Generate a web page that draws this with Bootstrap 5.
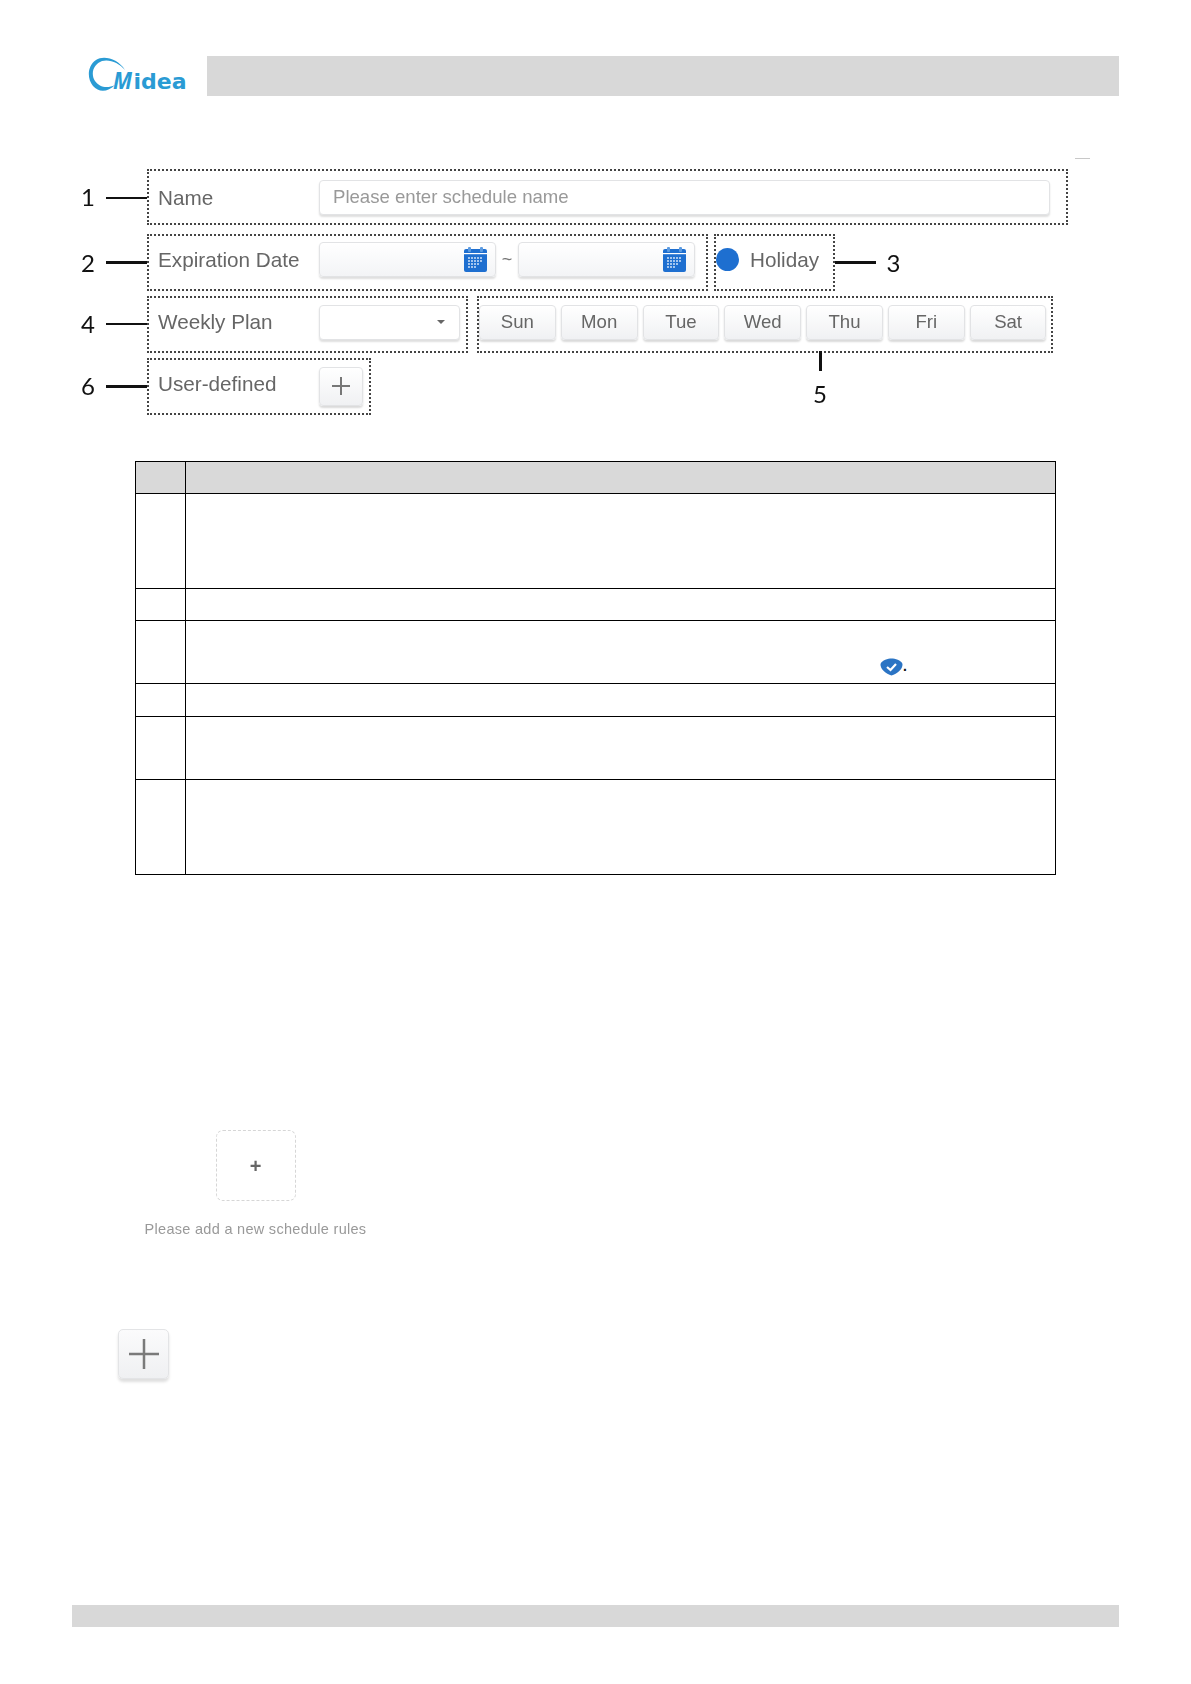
<!DOCTYPE html>
<html lang="en">
<head>
<meta charset="utf-8">
<title>Schedule rules</title>
<link href="https://cdn.jsdelivr.net/npm/bootstrap@5.3.0/dist/css/bootstrap.min.css" rel="stylesheet">
<style>
body{background:#fff;font-family:"Liberation Sans",Arial,sans-serif;color:#666}
.sheet{width:1191px;height:1684px;padding-top:56px;position:relative}
.top-strip{padding-left:88px;padding-right:72px}
.logo-slot{width:119px;height:44px;margin-top:-2px}
.grey-band{background:#d8d8d8;height:40px}
.logo-word{font-family:"DejaVu Sans",sans-serif;font-weight:700;font-size:22px;fill:#2a9bd4}
.logo-em{font-family:"Open Sans",sans-serif;font-weight:700;font-style:italic;font-size:24px;fill:#2a9bd4}
.tiny-dash{width:15px;height:1px;background:#c8c8c8;margin:60px 0 10px 1075px}
.form-zone{padding-left:81px;filter:blur(.35px)}
.form-row-a{margin-bottom:9.5px}
.form-row-b{margin-bottom:4.5px}
.form-row-c{margin-bottom:5.2px}
.num{font-family:Lato,"Liberation Sans",sans-serif;font-size:24px;line-height:1;color:#111;width:25px}
.lead-line{width:41px;background:#111;height:2px}
.lead-thick{height:3px}
.lead-low{margin-top:3px}
.tick-box{border:2px dotted #444;height:57px;padding-left:9px;flex:none}
.lift{padding-bottom:6px}
.lift-s{padding-bottom:4px}
.w-name{width:920.5px;height:55.5px;padding-top:1px}
.w-date{width:561px}
.w-holiday{width:120.500px;margin-left:6px;padding-left:0}
.w-weekly{width:321px}
.w-days{width:575.5px;margin-left:9px;padding-left:0;padding-right:4px;position:relative;gap:5px}
.w-user{width:223.5px}
.lab{width:161px;font-size:20.7px;color:#666;flex:none}
.lab-up{margin-top:-5px}
.fake-input{height:35px;background:#fff;border:1px solid #e2e3e5;border-radius:4px;box-shadow:0 2px 2px rgba(0,0,0,.13);font-size:18.6px;color:#999}
.f-name{width:731px;padding-left:13px}
.f-date{width:177px;background:linear-gradient(#fff,#f3f4f6);padding-right:8px}
.f-sel{width:141px;padding-right:14px}
.caret-mark{width:0;height:0;border-left:4px solid transparent;border-right:4px solid transparent;border-top:4px solid #666}
.tilde{width:22px;font-size:18px;text-align:center;color:#777}
.dot-blue{width:23px;height:23px;border-radius:50%;background:#1e6fd0;margin:0 11px 0 0}
.hol-text{font-size:20.7px;color:#666}
.lead-right{margin-right:11px}
.day-btn{width:76.900px;height:35px;padding:0;--bs-btn-font-size:18.6px;--bs-btn-color:#666;--bs-btn-bg:#f6f7f8;--bs-btn-border-color:#e2e3e5;background:linear-gradient(#fff,#f0f1f3);border-radius:4px;box-shadow:0 2px 2px rgba(0,0,0,.15);font-family:"Liberation Sans",sans-serif}
.callout-five{position:absolute;top:100%;left:329px;width:24px;text-align:center}
.callout-tick{width:3px;height:20px;background:#111;margin:0 auto 11px}
.add-mini{width:44px;height:39px;padding:0;background:linear-gradient(#fff,#f0f1f3);border:1px solid #e2e3e5;border-radius:4px;box-shadow:0 2px 2px rgba(0,0,0,.15)}
.tbl-wrap{margin:46.5px 0 0 135px;width:921px}
.doc-tbl{table-layout:fixed;margin:0;--bs-table-border-color:#000}
.doc-tbl td,.doc-tbl th{padding:0;border-width:1px;border-color:#000}
.doc-tbl thead th{background:#d9d9d9}
.c-first{width:50px}
.r32{height:32px}.r33{height:33px}.r95{height:95px}.r62{height:63px}
.shield-cell{padding-left:694px!important;padding-bottom:7px!important;vertical-align:bottom;color:#111;font-size:14px;font-weight:700;line-height:1}
.empty-zone{margin:255px 0 0 145px;width:221px;filter:blur(.3px)}
.dash-box{width:80px;height:71px;border:1px dashed #d6d6d6;border-radius:7px;font-size:20px;font-weight:700;color:#666}
.hint{font-size:14.5px;color:#999;margin-top:18px;letter-spacing:.02em;white-space:nowrap}
.add-big{width:51px;height:50px;margin:88px 0 0 118px;padding:0;background:linear-gradient(#fbfbfc,#eff0f2);border:1px solid #e3e4e6;border-radius:5px;box-shadow:0 3px 3px rgba(0,0,0,.13);display:block}
.foot-band{position:absolute;left:72px;top:1605px;width:1047px;height:22px;background:#d8d8d8}
</style>
</head>
<body>
<div class="sheet">
  <div class="top-strip d-flex">
    <div class="logo-slot flex-none">
      <svg width="104" height="44" viewBox="0 0 104 44">
        <path d="M37 16C30 5 16 1 8 6C-1 12 -1 25 5 32C11 39 20 38 27 31C19 35 11 33 7 27C2 19 6 10 14 7C22 5 31 9 37 16Z" fill="#2a9bd4"/>
        <text x="25" y="35" class="logo-em" textLength="19" lengthAdjust="spacingAndGlyphs">M</text>
        <text x="45.500" y="35" class="logo-word">idea</text>
      </svg>
    </div>
    <div class="grey-band flex-grow-1"></div>
  </div>
  <div class="tiny-dash"></div>

  <div class="form-zone">
    <div class="d-flex align-items-center form-row-a">
      <span class="num">1</span><span class="lead-line lead-low"></span>
      <div class="tick-box w-name d-flex align-items-center">
        <span class="lab">Name</span>
        <div class="fake-input f-name d-flex align-items-center">Please enter schedule name</div>
      </div>
    </div>
    <div class="d-flex align-items-center form-row-b">
      <span class="num">2</span><span class="lead-line lead-thick"></span>
      <div class="tick-box lift w-date d-flex align-items-center">
        <span class="lab">Expiration Date</span>
        <div class="fake-input f-date d-flex align-items-center justify-content-end">
          <svg width="23" height="25" viewBox="0 0 23 25"><rect y="2" width="23" height="23" rx="2" fill="#1e6fd0"/><rect x="4" width="3" height="5" rx="1" fill="#5d9be0"/><rect x="16" width="3" height="5" rx="1" fill="#5d9be0"/><rect y="6" width="23" height="1.2" fill="#fff"/><path d="M4 11h15M4 14h15M4 17h12M4 20h9" stroke="#cfe2f8" stroke-width="1.6" stroke-dasharray="2 1"/></svg>
        </div>
        <span class="tilde">~</span>
        <div class="fake-input f-date d-flex align-items-center justify-content-end">
          <svg width="23" height="25" viewBox="0 0 23 25"><rect y="2" width="23" height="23" rx="2" fill="#1e6fd0"/><rect x="4" width="3" height="5" rx="1" fill="#5d9be0"/><rect x="16" width="3" height="5" rx="1" fill="#5d9be0"/><rect y="6" width="23" height="1.2" fill="#fff"/><path d="M4 11h15M4 14h15M4 17h12M4 20h9" stroke="#cfe2f8" stroke-width="1.6" stroke-dasharray="2 1"/></svg>
        </div>
      </div>
      <div class="tick-box lift w-holiday d-flex align-items-center">
        <span class="dot-blue"></span><span class="hol-text">Holiday</span>
      </div>
      <span class="lead-line lead-thick lead-right"></span><span class="num">3</span>
    </div>
    <div class="d-flex align-items-center form-row-c">
      <span class="num">4</span><span class="lead-line"></span>
      <div class="tick-box lift-s w-weekly d-flex align-items-center">
        <span class="lab">Weekly Plan</span>
        <div class="fake-input f-sel d-flex align-items-center justify-content-end"><span class="caret-mark"></span></div>
      </div>
      <div class="tick-box lift-s w-days d-flex align-items-center justify-content-center">
        <button type="button" class="btn day-btn">Sun</button>
        <button type="button" class="btn day-btn">Mon</button>
        <button type="button" class="btn day-btn">Tue</button>
        <button type="button" class="btn day-btn">Wed</button>
        <button type="button" class="btn day-btn">Thu</button>
        <button type="button" class="btn day-btn">Fri</button>
        <button type="button" class="btn day-btn">Sat</button>
        <div class="callout-five"><div class="callout-tick"></div><span class="num d-block w-100">5</span></div>
      </div>
    </div>
    <div class="d-flex align-items-center">
      <span class="num">6</span><span class="lead-line lead-thick"></span>
      <div class="tick-box w-user d-flex align-items-center">
        <span class="lab lab-up">User-defined</span>
        <button type="button" class="btn add-mini d-flex align-items-center justify-content-center">
          <svg width="20" height="20" viewBox="0 0 20 20"><path d="M10 1v18M1 10h18" stroke="#777" stroke-width="2"/></svg>
        </button>
      </div>
    </div>
  </div>

  <div class="tbl-wrap">
    <table class="table table-bordered doc-tbl">
      <thead><tr class="r32"><th class="c-first"></th><th></th></tr></thead>
      <tbody>
        <tr class="r95"><td></td><td></td></tr>
        <tr class="r32"><td></td><td></td></tr>
        <tr class="r62"><td></td><td class="shield-cell"><svg width="23" height="18" viewBox="0 0 23 18"><path d="M11.5 0.5C15 0.500 21 2 22.500 6C23 11 17 16 11.500 17.500C6 16 0 11 0.500 6C2 2 8 0.500 11.500 0.500Z" fill="#2b74c4"/><path d="M7 9l3.500 3 5.500-6" fill="none" stroke="#fff" stroke-width="2.200"/></svg>.</td></tr>
        <tr class="r33"><td></td><td></td></tr>
        <tr class="r62"><td></td><td></td></tr>
        <tr class="r95"><td></td><td></td></tr>
      </tbody>
    </table>
  </div>

  <div class="empty-zone d-flex flex-column align-items-center">
    <div class="dash-box d-flex align-items-center justify-content-center">+</div>
    <div class="hint">Please add a new schedule rules</div>
  </div>
  <button type="button" class="btn add-big d-flex align-items-center justify-content-center">
    <svg width="32" height="32" viewBox="0 0 32 32"><path d="M16 1v30M1 16h30" stroke="#7a7a7a" stroke-width="2.500"/></svg>
  </button>
  <div class="foot-band"></div>
</div>
<script src="https://cdn.jsdelivr.net/npm/bootstrap@5.3.0/dist/js/bootstrap.bundle.min.js"></script>
</body>
</html>
